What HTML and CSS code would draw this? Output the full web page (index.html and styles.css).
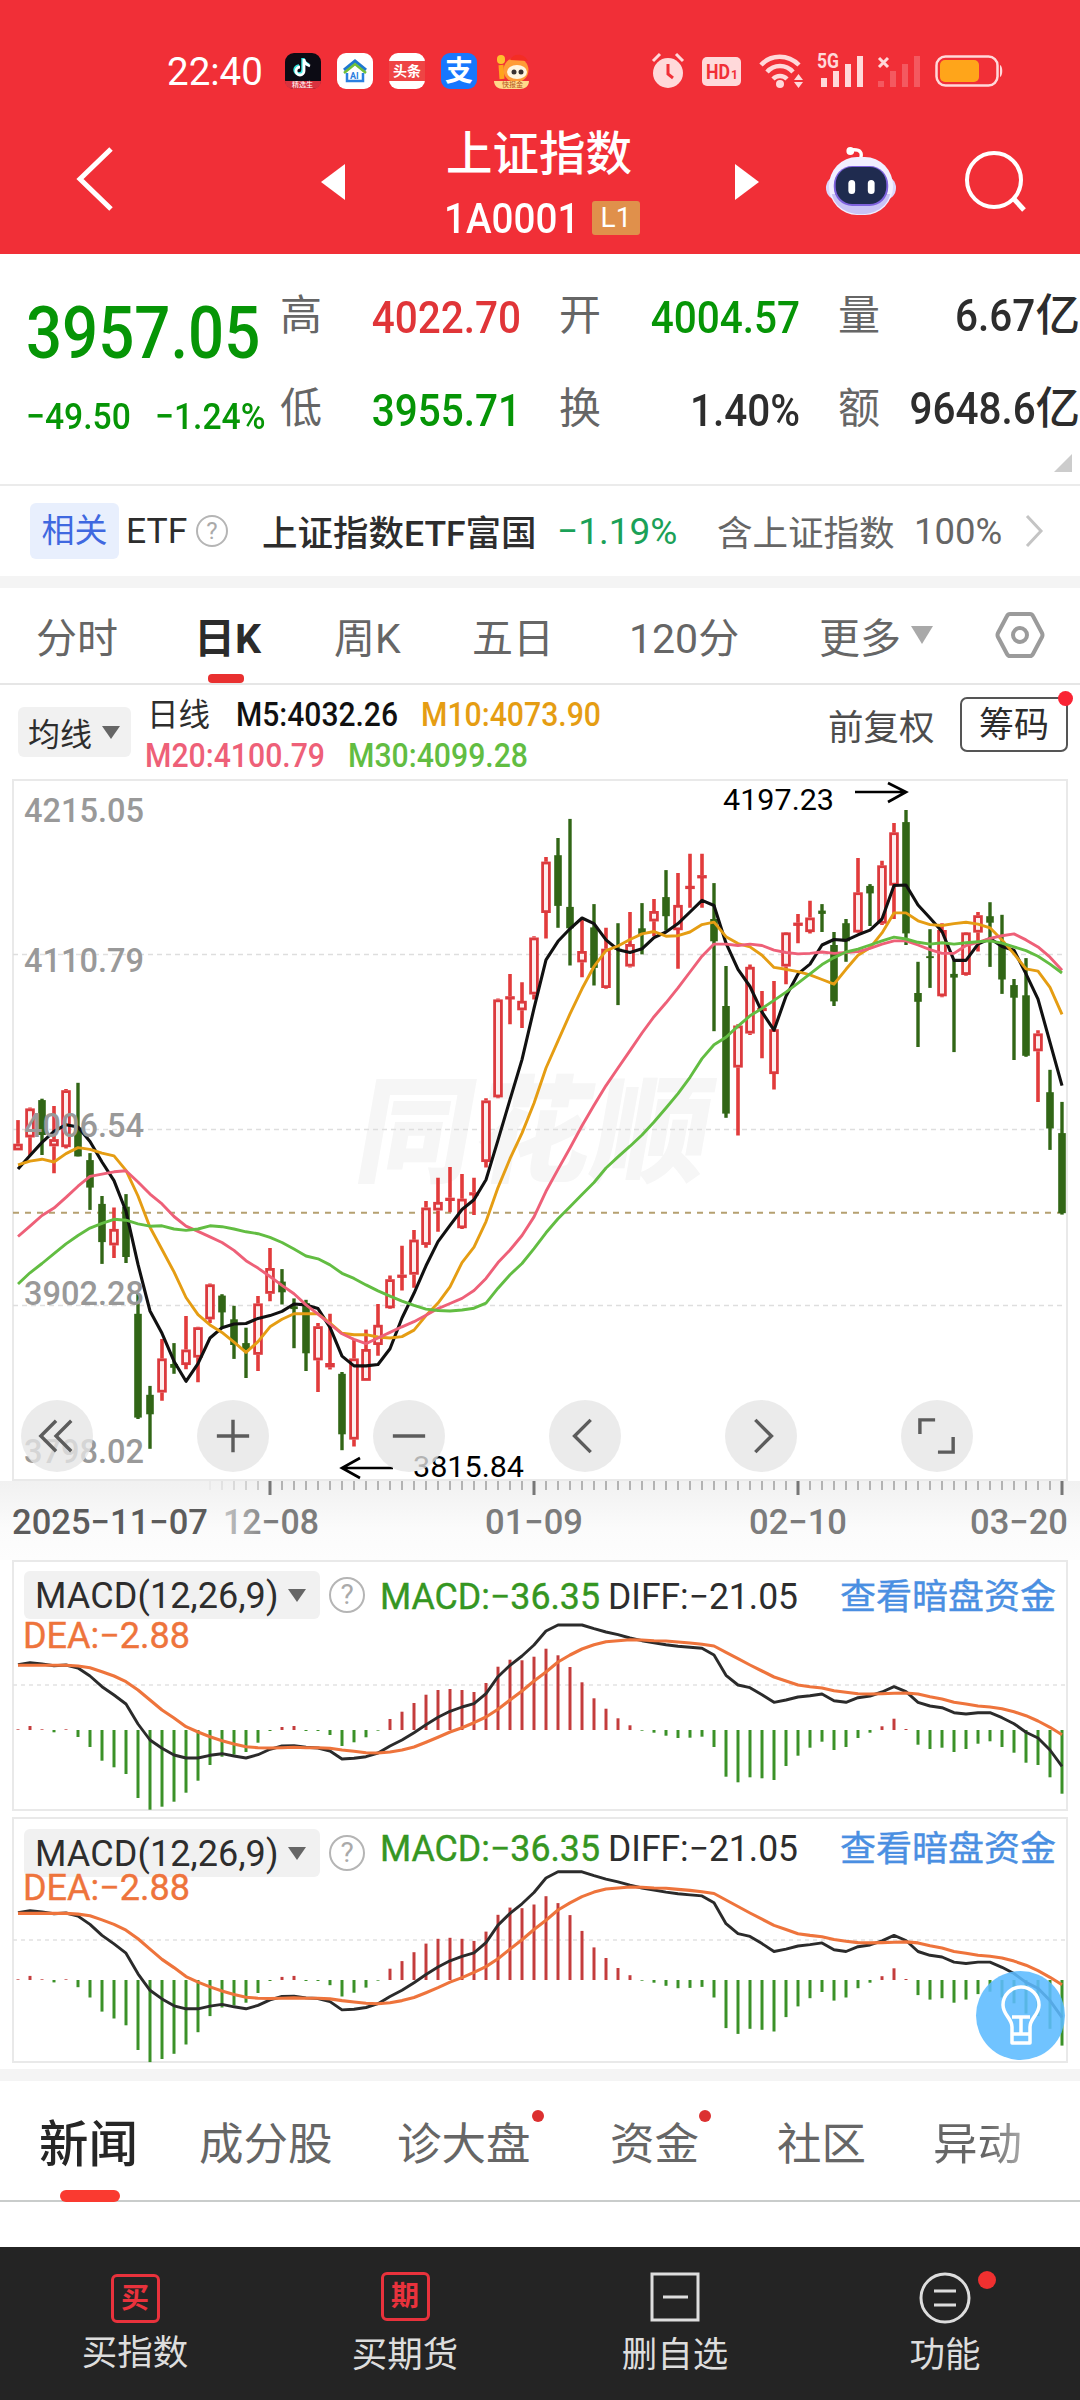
FILE: index.html
```html
<!DOCTYPE html>
<html lang="zh-CN">
<head>
    <meta charset="UTF-8">
    <meta name="viewport" content="width=device-width, initial-scale=1.0">
    <title>上证指数</title>
    <link rel="stylesheet" href="styles.css">
</head>
<body>
    <header class="header">
        <div class="status-bar">
            <span class="clock">22:40</span>
            <div class="app-icons">
                <svg width="36" height="36" viewBox="0 0 36 36">
                    <rect width="36" height="36" rx="9" fill="#0c0b14"/>
                    <path d="M18 5v12a4 4 0 1 1-4-4M18 6c1 4 3 5 6 6" fill="none" stroke="#35e4e0" stroke-width="3.400"/>
                    <path d="M19 6v12a4 4 0 1 1-4-4M19 7c1 4 3 5 6 6" fill="none" stroke="#fff" stroke-width="2.800"/>
                    <path d="M0 28h36c0 5-4 8-9 8H9c-5 0-9-3-9-8z" fill="#d8323f"/>
                    <text x="7" y="34" class="tiny" fill="#fff">精选生</text>
                </svg>
                <svg width="36" height="36" viewBox="0 0 36 36">
                    <rect width="36" height="36" rx="9" fill="#fff"/>
                    <path d="M7 17L18 8l11 9" fill="none" stroke="#1d78d0" stroke-width="3"/>
                    <path d="M7 20l11-9 11 9" fill="none" stroke="#6fbf3a" stroke-width="2.500"/>
                    <path d="M10 20v8h16v-8" fill="none" stroke="#2b7fe0" stroke-width="2.500"/>
                    <text x="13" y="26" class="tiny ai" fill="#2b7fe0">AI</text>
                </svg>
                <svg width="36" height="36" viewBox="0 0 36 36">
                    <rect width="36" height="36" rx="9" fill="#fff"/>
                    <path d="M0 8h36v20H0z" fill="#ee4444"/>
                    <text x="4" y="23" class="toutiao" fill="#fff">头条</text>
                </svg>
                <svg width="36" height="36" viewBox="0 0 36 36">
                    <rect width="36" height="36" rx="9" fill="#1777fe"/>
                    <text x="4" y="28" class="alipay" fill="#fff">支</text>
                </svg>
                <svg width="36" height="36" viewBox="0 0 36 36">
                    <rect x="4" y="2" width="8" height="9" rx="4" fill="#ffc02e"/>
                    <path d="M8 12l1 14" stroke="#ffa41c" stroke-width="5"/>
                    <circle cx="23" cy="17" r="12.500" fill="#ff9c35"/>
                    <path d="M17 7C20 0 31 0 35 8" fill="#f32d24"/>
                    <ellipse cx="24" cy="19" rx="10" ry="7" fill="#fff5e0"/>
                    <circle cx="21" cy="19" r="2.500" fill="#3a3230"/>
                    <circle cx="28" cy="19" r="2.500" fill="#3a3230"/>
                    <path d="M1 28h35c0 5-4 8-9 8H10c-5 0-9-3-9-8z" fill="#ffd98a"/>
                    <text x="9" y="34" class="tiny" fill="#b5561c">快报金</text>
                </svg>
            </div>
            <div class="sys-icons">
                <svg width="34" height="38" viewBox="0 0 34 38" fill="none" stroke="#ffd9da">
                    <circle cx="17" cy="21" r="15" fill="#ffd9da" stroke="none"/>
                    <path d="M2 9l7-7M32 9l-7-7" stroke-width="3"/>
                    <path d="M17 12v10l5 4" stroke="#f12f37" stroke-width="3"/>
                </svg>
                <svg class="hd" width="39" height="29" viewBox="0 0 39 29">
                    <rect width="39" height="29" rx="5" fill="#ffd9da"/>
                    <text x="4" y="22" font-size="21" font-weight="700" fill="#f12f37" textLength="24" lengthAdjust="spacingAndGlyphs">HD</text>
                    <text x="29" y="22" font-size="12" font-weight="700" fill="#f12f37">1</text>
                </svg>
                <svg class="wifi" width="45" height="36" viewBox="0 0 45 36" fill="none" stroke="#ffd9da" stroke-width="4.500">
                    <path d="M2 12C12 1 29 1 40 12M8 19c7-8 19-8 26 0M14 26c4-4 10-4 14 0"/>
                    <circle cx="21" cy="31" r="4" fill="#ffd9da" stroke="none"/>
                    <path d="M35 27l4.500-6 4.500 6zM35 29l4.500 6 4.500-6z" fill="#ffd9da" stroke="none"/>
                </svg>
                <svg class="signal" width="47" height="34" viewBox="0 0 47 34" fill="#ffd9da">
                    <text x="0" y="14" font-size="20" font-weight="700" textLength="22" lengthAdjust="spacingAndGlyphs">5G</text>
                    <path d="M4 24h6v9H4zM16 17h6v16h-6zM28 10h6v23h-6zM40 2h6v31h-6z"/>
                </svg>
                <svg class="signal" width="44" height="34" viewBox="0 0 44 34" fill="#ffd9da">
                    <path d="M2 4l9 9M11 4l-9 9" stroke="#ffd9da" stroke-width="3"/>
                    <path d="M1 27h6v6H1zM13 17h6v16h-6zM25 10h6v23h-6zM37 2h6v31h-6z" opacity=".25"/>
                </svg>
                <svg class="battery" width="68" height="32" viewBox="0 0 68 32">
                    <rect x="1.500" y="1.500" width="61" height="29" rx="9" fill="none" stroke="#ffd9da" stroke-width="2.500"/>
                    <rect x="5" y="5" width="39" height="22" rx="5" fill="#ffa51a"/>
                    <path d="M65 10c3 1 3 11 0 12z" fill="#ffd9da"/>
                </svg>
            </div>
        </div>
        <div class="title-bar">
            <svg class="back" width="40" height="66" viewBox="0 0 40 66" fill="none" stroke="#fff" stroke-width="5"><path d="M36 3L5 33l31 30"/></svg>
            <svg class="prev" width="24" height="36" viewBox="0 0 24 36"><path d="M0 18L24 0v36z" fill="#fff"/></svg>
            <div class="title">
                <h1>上证指数</h1>
                <div class="code"><span>1A0001</span><span class="level">L1</span></div>
            </div>
            <svg class="next" width="24" height="36" viewBox="0 0 24 36"><path d="M24 18L0 0v36z" fill="#fff"/></svg>
            <svg class="robot" width="72" height="70" viewBox="0 0 74 70" preserveAspectRatio="none">
                <path d="M36 14c3-7 1-11-9-10" fill="none" stroke="#fff" stroke-width="3.500"/>
                <circle cx="26" cy="5" r="4" fill="#fff"/>
                <rect x="1" y="30" width="72" height="24" rx="12" fill="#dcd7fb"/>
                <rect x="4" y="11" width="66" height="58" rx="29" fill="#f2efff"/>
                <path d="M7 48c6 27 54 27 60 0z" fill="#c9c2f5"/>
                <rect x="9" y="20" width="56" height="40" rx="19" fill="#7e62dd"/>
                <rect x="11" y="21" width="52" height="37" rx="17" fill="#1f2b4f"/>
                <rect x="24" y="34" width="7" height="14" rx="3.500" fill="#fff"/>
                <rect x="44" y="34" width="7" height="14" rx="3.500" fill="#fff"/>
            </svg>
            <svg class="search" width="62" height="64" viewBox="0 0 62 64" fill="none" stroke="#fff" stroke-width="4">
                <circle cx="29" cy="31" r="27"/><path d="M49 50l10 11" stroke-width="5"/>
            </svg>
        </div>
    </header>

    <section class="quote">
        <div class="price green">
            <div class="last"><span class="din">3957.05</span></div>
            <div class="change"><span class="din">−49.50</span><span class="din">−1.24%</span></div>
        </div>
        <div class="stats">
            <div class="stat"><label>高</label><b class="din red">4022.70</b></div>
            <div class="stat"><label>开</label><b class="din green">4004.57</b></div>
            <div class="stat"><label>量</label><b><i class="din">6.67</i>亿</b></div>
            <div class="stat"><label>低</label><b class="din green">3955.71</b></div>
            <div class="stat"><label>换</label><b class="din">1.40%</b></div>
            <div class="stat"><label>额</label><b><i class="din">9648.6</i>亿</b></div>
        </div>
        <div class="corner"></div>
    </section>

    <section class="etf">
        <span class="tag">相关</span>
        <span class="etf-word">ETF</span>
        <span class="help">?</span>
        <span class="etf-name">上证指数ETF富国</span>
        <span class="etf-rate">−1.19%</span>
        <span class="etf-hold">含上证指数</span>
        <span class="etf-pct">100%</span>
        <svg width="18" height="34" viewBox="0 0 18 34" fill="none" stroke="#c4c4c4" stroke-width="3"><path d="M2 2l14 15L2 32"/></svg>
    </section>

    <nav class="periods">
        <a class="p1">分时</a>
        <a class="p2 active">日K</a>
        <a class="p3">周K</a>
        <a class="p4">五日</a>
        <a class="p5">120分</a>
        <a class="p6">更多</a>
        <svg class="more" width="22" height="18" viewBox="0 0 22 18"><path d="M0 0h22L11 18z" fill="#a9a9a9"/></svg>
        <svg class="gear" width="50" height="48" viewBox="0 0 50 48" fill="none" stroke="#9b9b9b" stroke-width="4">
            <path d="M15 3h20q2 0 3 2l9 17q1 2 0 4l-9 17q-1 2-3 2H15q-2 0-3-2L3 26q-1-2 0-4l9-17q1-2 3-2z"/>
            <circle cx="25" cy="24" r="7"/>
        </svg>
    </nav>

    <section class="averages">
        <div class="ma-button">均线<svg width="18" height="13" viewBox="0 0 18 13"><path d="M0 0h18L9 13z" fill="#666"/></svg></div>
        <svg class="ma-values" width="470" height="94" viewBox="0 0 470 94">
            <text x="-1" y="41" class="ma-name">日线</text>
            <text x="88" y="41" fill="#111" textLength="162" lengthAdjust="spacingAndGlyphs">M5:4032.26</text>
            <text x="273" y="41" fill="#e59d13" textLength="180" lengthAdjust="spacingAndGlyphs">M10:4073.90</text>
            <text x="-3" y="82" fill="#ee6078" textLength="180" lengthAdjust="spacingAndGlyphs">M20:4100.79</text>
            <text x="200" y="82" fill="#62bd42" textLength="180" lengthAdjust="spacingAndGlyphs">M30:4099.28</text>
        </svg>
        <span class="adjust">前复权</span>
        <span class="chips">筹码</span>
    </section>

    <section class="kline">
        <svg id="kline" width="1080" height="702" viewBox="0 779 1080 702"></svg>
        <div class="tools">
            <button><svg viewBox="0 0 40 40"><path d="M19 4L3 20l16 16M35 4L19 20l16 16"/></svg></button>
            <button><svg viewBox="0 0 40 40"><path d="M20 3v34M3 20h34"/></svg></button>
            <button><svg viewBox="0 0 40 40"><path d="M3 20h34"/></svg></button>
            <button><svg viewBox="0 0 40 40"><path d="M26 3L9 20l17 17"/></svg></button>
            <button><svg viewBox="0 0 40 40"><path d="M14 3l17 17-17 17"/></svg></button>
            <button><svg viewBox="0 0 40 40"><path d="M2 18V3h16M37 21v16H21"/></svg></button>
        </div>
    </section>

    <section class="time-axis">
        <svg id="axis" width="1080" height="79" viewBox="0 1481 1080 79"></svg>
    </section>

    <section class="macd">
        <div class="macd-button">MACD(12,26,9)<svg width="18" height="13" viewBox="0 0 18 13"><path d="M0 0h18L9 13z" fill="#666"/></svg></div>
        <span class="help">?</span>
        <svg id="macd1" width="1080" height="257" viewBox="0 0 1080 257"></svg>
    </section>
    <section class="macd second">
        <div class="macd-button">MACD(12,26,9)<svg width="18" height="13" viewBox="0 0 18 13"><path d="M0 0h18L9 13z" fill="#666"/></svg></div>
        <span class="help">?</span>
        <svg id="macd2" width="1080" height="252" viewBox="0 0 1080 252"></svg>
        <div class="lamp">
            <svg width="44" height="62" viewBox="0 0 44 62" fill="none" stroke="#fff" stroke-width="3.500" stroke-linejoin="round">
                <path d="M13 58V42C13 33 4 30 4 20a18 18 0 0 1 36 0c0 10-9 13-9 22v16z"/>
                <path d="M13 32h18M22 32v17M13 49h18"/>
            </svg>
        </div>
    </section>

    <nav class="news">
        <a class="n1 active">新闻</a>
        <a class="n2">成分股</a>
        <a class="n3 dot">诊大盘</a>
        <a class="n4 dot">资金</a>
        <a class="n5">社区</a>
        <a class="n6">异动</a>
    </nav>
    <div class="blank"></div>

    <footer class="bottom-nav">
        <a><span class="box buy">买</span>买指数</a>
        <a><span class="box future">期</span>买期货</a>
        <a><svg width="50" height="50" viewBox="0 0 50 50" fill="none" stroke="#ddd" stroke-width="3"><path d="M2 2h46v46H2zM13 25h25"/></svg>删自选</a>
        <a class="func"><svg width="52" height="52" viewBox="0 0 52 52" fill="none" stroke="#ddd" stroke-width="3"><circle cx="26" cy="26" r="24"/><path d="M15 19h22M15 33h22"/></svg>功能</a>
    </footer>
    <script src="script.js"></script>
</body>
</html>
```

FILE: styles.css
```css
* {
    box-sizing: border-box;
}
body {
    margin: 0;
    width: 1080px;
    height: 2400px;
    overflow: hidden;
    background: #fff;
    color: #2d2d2d;
    font-family: Roboto, "Noto Sans CJK SC", sans-serif;
}
svg {
    display: block;
    flex: none;
    overflow: visible;
}
.din {
    display: inline-block;
    font-style: normal;
    transform: scaleX(0.91);
    transform-origin: right center;
}
.green {
    color: #069506;
}
.red {
    color: #e03538;
}
.tiny {
    font-size: 7px;
}
.ai {
    font-size: 9px;
    font-weight: 700;
}
.toutiao {
    font-size: 14px;
    font-weight: 700;
}
.alipay {
    font-size: 28px;
    font-weight: 700;
}

/* header */
.header {
    height: 254px;
    background: #f12f37;
    color: #fff;
}
.status-bar {
    display: flex;
    align-items: center;
    height: 142px;
    padding-left: 167px;
}
.clock {
    width: 118px;
    font-size: 38.5px;
}
.app-icons {
    display: flex;
    gap: 16px;
    width: 366px;
}
.sys-icons {
    display: flex;
    align-items: center;
}
.hd {
    margin-left: 17px;
}
.wifi {
    margin-left: 18px;
}
.signal {
    margin-left: 13px;
}
.battery {
    margin-left: 14px;
}
.title-bar {
    display: flex;
    height: 112px;
}
.back {
    margin: 4px 0 0 75px;
}
.prev {
    margin: 22px 0 0 206px;
}
.title {
    width: 196px;
    margin-left: 101px;
}
.title h1 {
    margin: -22px 0 0;
    font-size: 46.5px;
    line-height: 68px;
    font-weight: 500;
    white-space: nowrap;
}
.code {
    display: flex;
    align-items: center;
    height: 34px;
    margin: 13px 0 0 -2px;
    font-size: 42px;
}
.code span:first-child {
    width: 148px;
    font-weight: 500;
    transform: scaleX(0.92);
    transform-origin: left;
}
.code .level {
    width: 48px;
    height: 34px;
    border-radius: 3px;
    background: #e0904b;
    font-size: 28px;
    line-height: 34px;
    text-align: center;
}
.next {
    margin: 22px 0 0 93px;
}
.robot {
    margin: 4px 0 0 66px;
}
.search {
    margin: 7px 0 0 68px;
}

/* quote */
.quote {
    position: relative;
    display: flex;
    height: 232px;
    border-bottom: 2px solid #ebebeb;
}
.price {
    width: 280px;
    padding: 35px 0 0 26px;
}
.price .din {
    transform-origin: left center;
}
.last {
    font-size: 73px;
    line-height: 88px;
    font-weight: 500;
}
.last .din {
    transform: scaleX(0.87);
}
.change {
    display: flex;
    margin-top: 17px;
    font-size: 37px;
    line-height: 46px;
    font-weight: 500;
    white-space: nowrap;
}
.change .din:first-child {
    width: 129px;
}
.stats {
    display: grid;
    grid-template-columns: repeat(3, 241px);
    grid-template-rows: 93px 93px;
    column-gap: 38px;
    padding-top: 17px;
}
.stat {
    display: flex;
    align-items: center;
    justify-content: space-between;
    font-size: 43px;
    line-height: 60px;
    white-space: nowrap;
}
.stat label {
    margin-top: -3px;
    font-size: 42px;
    color: #666;
}
.stat b {
    font-weight: 500;
    font-size: 44.5px;
}
.stat:nth-child(3n) b {
    margin: -3px -1px 0 0;
}
.corner {
    position: absolute;
    right: 8px;
    bottom: 12px;
    border-left: 18px solid transparent;
    border-bottom: 18px solid #ccc;
}

/* related ETF */
.etf {
    display: flex;
    align-items: center;
    height: 90px;
    padding-left: 30px;
    font-size: 35.5px;
    white-space: nowrap;
}
.tag {
    width: 89px;
    height: 56px;
    border-radius: 6px;
    background: #e8effd;
    color: #3f68e0;
    font-size: 33px;
    line-height: 56px;
    text-align: center;
}
.etf-word {
    width: 69px;
    padding-left: 7px;
}
.help {
    width: 32px;
    height: 32px;
    border: 2px solid #b5b5b5;
    border-radius: 50%;
    color: #aaa;
    font-size: 24px;
    line-height: 28px;
    text-align: center;
}
.etf .help {
    margin-left: 8px;
}
.etf-name {
    width: 329px;
    padding-left: 34px;
    font-weight: 500;
}
.etf-name,
.etf-hold {
    margin-top: -2px;
}
.etf-rate {
    width: 160px;
    color: #1ba158;
    font-size: 37px;
}
.etf-hold {
    width: 197px;
    color: #666;
}
.etf-pct {
    width: 111px;
    color: #666;
    font-size: 36.5px;
}

/* period tabs */
.periods {
    display: flex;
    align-items: center;
    height: 109px;
    border-top: 12px solid #f4f4f4;
    border-bottom: 2px solid #e6e6e6;
    padding: 0 0 2px 36px;
    font-size: 41px;
    color: #666;
    white-space: nowrap;
}
.p1 {
    width: 158px;
}
.p2 {
    position: relative;
    width: 140px;
}
.periods .active {
    color: #2b2b2b;
    font-weight: 700;
}
.periods .active::after {
    content: "";
    position: absolute;
    left: 14px;
    top: 69px;
    width: 36px;
    height: 9px;
    border-radius: 4px;
    background: #e93030;
}
.p3 {
    width: 138px;
}
.p4 {
    width: 157px;
}
.p5 {
    width: 190px;
}
.p6 {
    width: 92px;
}
.gear {
    margin-left: 62px;
}

/* moving averages */
.averages {
    display: flex;
    height: 94px;
    padding-left: 18px;
}
.ma-button {
    display: flex;
    align-items: center;
    gap: 10px;
    width: 113px;
    height: 50px;
    margin: 22px 17px 0 0;
    padding-left: 10px;
    border-radius: 6px;
    background: #f1f1f1;
    font-size: 32px;
}
.ma-values {
    font-size: 33px;
    font-weight: 500;
}
.ma-name {
    font-size: 31.5px;
    font-weight: 400;
    fill: #2d2d2d;
}
.adjust {
    width: 132px;
    margin-left: 210px;
    font-size: 35.5px;
    line-height: 86px;
    color: #4d4d4d;
}
.chips {
    position: relative;
    width: 108px;
    height: 55px;
    margin-top: 12px;
    border: 2px solid #555;
    border-radius: 7px;
    font-size: 35px;
    line-height: 54px;
    text-align: center;
}
.chips::after {
    content: "";
    position: absolute;
    right: -7px;
    top: -8px;
    width: 15px;
    height: 15px;
    border-radius: 50%;
    background: #fa2434;
}

/* candles */
.kline {
    position: relative;
    height: 702px;
}
.tools {
    position: absolute;
    left: 21px;
    top: 621px;
    display: flex;
    gap: 104px;
}
.tools button {
    display: flex;
    align-items: center;
    justify-content: center;
    width: 72px;
    height: 72px;
    padding: 0;
    border: 0;
    border-radius: 50%;
    background: rgba(230, 230, 230, 0.78);
}
.tools svg {
    width: 38px;
    height: 38px;
    fill: none;
    stroke: #5c5c5c;
    stroke-width: 3.6;
}
.scale-label {
    font-size: 34px;
    font-weight: 500;
    fill: #999;
}
.peak {
    font-size: 30px;
    fill: #000;
}
.watermark {
    font-size: 116px;
    font-weight: 900;
    fill: #f6f6f6;
}
.time-axis {
    height: 79px;
    background: linear-gradient(#f1f1f1, #fbfbfb 60%, #fdfdfd);
}
.axis-label {
    font-size: 35px;
    font-weight: 500;
    fill: #7c7c7c;
}

/* macd */
.macd {
    position: relative;
    height: 257px;
}
.macd.second {
    height: 252px;
}
.macd-button {
    position: absolute;
    left: 24px;
    top: 11px;
    display: flex;
    align-items: center;
    width: 296px;
    height: 48px;
    padding: 2px 0 0 11px;
    border-radius: 6px;
    background: #f1f1f1;
    font-size: 36px;
    letter-spacing: 0.1px;
}
.macd-button svg {
    position: absolute;
    right: 14px;
    top: 18px;
}
.second .macd-button {
    top: 12px;
}
.macd .help {
    position: absolute;
    left: 329px;
    top: 17px;
    width: 36px;
    height: 36px;
    border-width: 2.5px;
    font-size: 28px;
    line-height: 31px;
}
.second .help {
    top: 18px;
}
.macd > svg {
    position: relative;
}
.macd-value {
    font-size: 36.5px;
}
.macd-link {
    font-size: 35.7px;
    fill: #4a8fe2;
}
.lamp {
    position: absolute;
    left: 976px;
    top: 154px;
    display: flex;
    align-items: center;
    justify-content: center;
    width: 89px;
    height: 89px;
    border-radius: 50%;
    background: rgba(92, 187, 255, 0.88);
}

/* news tabs */
.news {
    display: flex;
    align-items: center;
    height: 133px;
    border-top: 12px solid #f4f4f4;
    border-bottom: 2px solid #c9cccb;
    padding: 0 0 1px 39px;
    font-size: 44.5px;
    color: #666;
    white-space: nowrap;
}
.news a {
    position: relative;
}
.n1 {
    width: 160px;
}
.n2 {
    width: 198px;
}
.n3 {
    width: 213px;
}
.n4 {
    width: 167px;
}
.n5 {
    width: 156px;
}
.n6 {
    background: linear-gradient(90deg, #666 60%, #aaa);
    background-clip: text;
    -webkit-background-clip: text;
    color: transparent;
}
.news .active {
    font-size: 49.5px;
    font-weight: 500;
    color: #262626;
}
.news .active::after {
    content: "";
    position: absolute;
    left: 21px;
    top: 85px;
    width: 60px;
    height: 12px;
    border-radius: 6px;
    background: #fa3a30;
}
.dot::after {
    content: "";
    position: absolute;
    top: 2px;
    width: 12px;
    height: 12px;
    border-radius: 50%;
    background: #dc3030;
}
.n3::after {
    left: 135px;
}
.n4::after {
    left: 89px;
}
.blank {
    height: 45px;
}

/* bottom bar */
.bottom-nav {
    display: grid;
    grid-template-columns: repeat(4, 270px);
    height: 153px;
    background: #242424;
    color: #ddd;
}
.bottom-nav a {
    position: relative;
    display: flex;
    flex-direction: column;
    align-items: center;
    padding-top: 25px;
    font-size: 35.5px;
    line-height: 67px;
}
.box {
    width: 49px;
    height: 49px;
    margin-bottom: 1px;
    border: 3px solid #e9323c;
    border-radius: 6px;
    color: #e9323c;
    font-size: 28px;
    font-weight: 700;
    line-height: 43px;
    text-align: center;
}
.buy {
    margin-top: 2px;
    margin-bottom: -3px;
    line-height: 44px;
}
.func::after {
    content: "";
    position: absolute;
    left: 168px;
    top: 24px;
    width: 18px;
    height: 18px;
    border-radius: 50%;
    background: #f03030;
}
.func svg {
    margin-bottom: -2px;
}
```

FILE: script.js
```javascript
// One slot every 12px, 88 trading days
const STEP = 12;
const X0 = 18;
const xAt = i => X0 + i * STEP;
const ky = v => (770 + v / 2.148).toFixed(1);

// type, high, body top, body bottom, low (r = up, g = down)
const candles = `r752,803,817,817 r725,727,789,828 g706,709,784,827 r722,793,808,866 r685,688,810,813 g672,768,830,830
g823,838,897,945 g915,932,1014,1061 r940,986,1021,1048 g911,938,1046,1059 g1125,1168,1391,1394 g1323,1342,1384,1458
r1222,1264,1337,1355 g1231,1276,1284,1297 r1173,1245,1278,1287 r1196,1197,1262,1315 r1103,1105,1180,1188 g1126,1129,1165,1198
g1151,1180,1235,1265 g1198,1231,1244,1306 r1130,1146,1256,1291 r1027,1070,1125,1141 g1072,1099,1122,1148 g1135,1152,1158,1242
g1138,1145,1253,1291 r1188,1195,1268,1336 r1168,1274,1283,1288 g1293,1297,1427,1461 r1224,1264,1438,1453 r1202,1244,1312,1312
r1147,1192,1235,1258 r1086,1094,1156,1158 r1022,1084,1088,1118 r988,1009,1084,1112 r926,940,1020,1026 r876,928,946,992
r853,919,923,950 r868,921,984,986 r876,907,911,956 r705,710,842,854 r491,493,703,705 r438,486,491,546
r456,496,516,554 r357,360,482,493 r187,197,307,362 g146,183,292,339 g105,294,340,420 r322,389,413,445
g288,338,425,463 r339,384,468,470 g329,384,386,505 r305,374,422,424 g286,340,352,396 r277,303,325,357
g215,273,314,345 r221,290,344,427 r180,249,254,296 r180,226,231,296 g243,320,368,561 g421,507,738,747
r546,549,639,785 r418,423,566,569 r475,511,515,619 r453,557,653,686 r348,349,422,460 r309,328,333,372
r281,317,348,351 g288,302,309,348 g348,376,497,507 g320,329,368,412 r189,263,349,350 g245,249,265,335
r195,205,330,333 r114,134,248,320 g86,112,351,376 g412,479,498,595 g342,400,404,468 r329,344,486,488
g409,438,446,606 r348,349,440,442 r305,312,349,390 g284,314,328,423 g311,376,450,481 g449,462,489,623
g404,484,614,616 r559,566,604,713 g644,692,770,816 g713,780,952,955`.split(/\s+/);

const averages = {
    '#111': [857,828,800,776,762,767,798,842,882,948,1062,1162,1210,1270,1313,1275,1220,1198,1190,1189,1178,1172,1163,1147,1149,1157,1197,1259,1280,1280,1277,1243,1177,1124,1065,1013,978,944,923,880,795,708,622,512,408,368,341,318,330,365,386,392,384,360,348,330,305,280,291,372,428,465,520,559,486,438,417,376,364,366,354,344,320,248,247,290,318,347,409,409,374,362,379,387,438,492,585,678],
    '#e59d13': [848,840,836,842,824,811,815,823,829,860,915,982,1030,1078,1133,1170,1192,1208,1229,1251,1228,1196,1180,1168,1168,1168,1188,1210,1213,1213,1218,1220,1217,1203,1172,1145,1110,1058,1025,970,897,835,780,716,640,582,524,470,422,388,378,364,352,347,357,356,348,332,327,358,373,380,398,424,428,433,440,450,460,428,398,382,350,307,307,324,332,334,330,327,331,339,365,395,427,432,467,525],
    '#ee6078': [1002,980,957,941,918,894,873,868,863,861,885,911,932,959,980,991,1003,1015,1032,1054,1070,1088,1107,1125,1149,1169,1190,1211,1223,1232,1220,1208,1196,1185,1171,1157,1146,1135,1118,1092,1058,1031,1000,960,905,858,812,764,720,678,640,603,565,530,500,468,434,400,374,374,377,374,377,387,392,395,394,391,394,392,390,383,374,367,367,376,386,394,394,377,370,362,356,352,365,380,402,430],
    '#62bd42': [1104,1080,1060,1039,1018,1000,984,974,965,967,975,980,979,986,989,986,979,981,986,992,996,1004,1015,1029,1044,1050,1063,1081,1092,1106,1119,1130,1141,1150,1158,1161,1162,1160,1156,1145,1113,1084,1060,1028,994,964,938,912,886,855,831,808,784,756,726,695,660,620,590,574,550,528,512,495,477,458,438,418,403,391,385,376,367,359,363,370,374,371,374,371,369,367,372,380,388,400,417,436]
};

function line(values, y, color, width) {
    const pts = values.map((v, i) => `${xAt(i)},${y(v)}`).join(' ');
    return `<polyline points="${pts}" fill="none" stroke="${color}" stroke-width="${width}" stroke-linejoin="round"/>`;
}

function text(x, y, str, cls, width, extra = '') {
    return `<text x="${x}" y="${y}" class="${cls}" textLength="${width}" lengthAdjust="spacingAndGlyphs" ${extra}>${str}</text>`;
}

function drawKline() {
    let s = '<rect x="13" y="780" width="1054" height="700" fill="#fff" stroke="#e9e9e9" stroke-width="2"/>';
    s += '<text class="watermark" transform="translate(352 1173) skewX(-10)" textLength="352">同花顺</text>';
    [396, 772, 1150].forEach(v => {
        s += `<path d="M13 ${ky(v)}H1066" stroke="#dedede" stroke-width="1.500" stroke-dasharray="5 4"/>`;
    });
    s += `<path d="M13 ${ky(951)}H1066" stroke="#b5a070" stroke-width="2" stroke-dasharray="6 6"/>`;
    candles.forEach((c, i) => {
        const [hi, top, bottom, lo] = c.slice(1).split(',').map(Number);
        const x = xAt(i);
        if (c[0] === 'g') {
            s += `<path d="M${x} ${ky(hi)}V${ky(lo)}" stroke="#316616" stroke-width="3.400"/>`;
            s += `<path d="M${x} ${ky(top)}V${ky(bottom)}" stroke="#316616" stroke-width="7.600"/>`;
        } else {
            s += `<path d="M${x} ${ky(hi)}V${ky(top)}M${x} ${ky(bottom)}V${ky(lo)}" stroke="#e23b3b" stroke-width="3.600"/>`;
            const h = Math.max((bottom - top) / 2.148 - 2.6, 0.5);
            s += `<rect x="${x - 3.4}" y="${+ky(top) + 1.3}" width="6.800" height="${h}" fill="#fdeeee" stroke="#dc3a3e" stroke-width="2.800"/>`;
        }
    });
    Object.entries(averages).forEach(([color, values]) => {
        s += line(values, ky, color, color === '#111' ? 3.1 : 2.9);
    });
    [['4215.05', 822], ['4110.79', 972], ['4006.54', 1137], ['3902.28', 1305], ['3798.02', 1463]].forEach(([v, y]) => {
        s += text(24, y, v, 'scale-label', 120);
    });
    s += text(723, 810, '4197.23', 'peak', 111);
    s += text(413, 1477, '3815.84', 'peak', 111);
    s += '<path d="M855 792H906M888 783L906 792L888 802" fill="none" stroke="#000" stroke-width="2.700"/>';
    s += '<path d="M393 1468H342M360 1458L342 1468L360 1478" fill="none" stroke="#000" stroke-width="2.700"/>';
    document.getElementById('kline').innerHTML = s;
}

function drawAxis() {
    let s = '<defs><linearGradient id="fade"><stop offset="0" stop-color="#c4c4c4"/><stop offset=".5" stop-color="#7c7c7c"/></linearGradient></defs>';
    for (let i = 16; i < 88; i++) {
        const major = (i - 21) % 22 === 0;
        const faint = i < 21 ? (i - 15) / 8 : 1;
        s += `<path d="M${xAt(i)} 1481V${major ? 1495 : 1490}" stroke="${major ? '#777' : '#999'}" stroke-width="${major ? 3 : 1.4}" opacity="${faint}"/>`;
    }
    s += text(12, 1534, '2025−11−07', 'axis-label', 196, 'style="fill:#5c5c5c"');
    s += text(223, 1534, '12−08', 'axis-label', 96, 'style="fill:url(#fade)"');
    s += text(485, 1534, '01−09', 'axis-label', 98);
    s += text(749, 1534, '02−10', 'axis-label', 98);
    s += text(970, 1534, '03−20', 'axis-label', 98);
    document.getElementById('axis').innerHTML = s;
}

// Offsets from the zero line, three units per pixel
const bars = [538,528,538,547,538,561,591,632,652,672,744,779,770,755,728,692,645,620,614,606,578,543,531,528,543,543,555,588,577,562,542,507,485,459,434,420,417,420,426,399,350,329,331,320,296,316,351,397,445,476,505,526,542,548,557,564,563,560,591,680,697,682,685,690,648,617,593,575,600,591,564,548,529,506,537,584,597,593,606,597,581,574,591,608,638,645,682,731];
const diff = [344,338,342,347,345,354,378,410,435,462,522,570,595,615,624,624,616,611,618,624,614,598,588,587,592,594,603,627,625,620,609,588,570,548,524,502,484,471,461,431,380,346,318,285,243,225,225,225,236,246,254,264,272,278,284,289,292,295,315,376,405,413,434,457,450,441,437,432,452,457,443,438,426,410,425,457,468,473,488,492,488,488,503,521,547,564,600,649];
const dea = [346,346,346,346,346,348,353,365,378,395,420,450,480,504,530,546,560,572,582,590,593,594,593,592,593,593,595,600,604,608,609,606,600,591,577,562,546,533,518,501,478,450,423,393,366,336,315,297,284,275,272,269,270,272,273,276,279,283,288,307,326,345,363,381,393,405,410,414,422,427,431,432,431,430,429,432,440,447,457,462,468,471,476,485,497,513,532,554];

function drawMacd(id, o) {
    const y = v => (o.zero + (v - 540) / 3 * o.scale).toFixed(1);
    let s = `<rect x="13" y="1" width="1054" height="${o.height}" fill="none" stroke="#e9e9e9" stroke-width="2"/>`;
    s += `<path d="M13 ${o.grid}H1066" stroke="#e2e2e2" stroke-width="1.500" stroke-dasharray="4 4"/>`;
    bars.forEach((v, i) => {
        s += `<path d="M${xAt(i)} ${o.zero}V${y(v)}" stroke="${v < 540 ? '#c43c3c' : '#3b9128'}" stroke-width="3"/>`;
    });
    s += line(diff, y, '#2b2b2b', 2.9) + line(dea, y, '#ee743c', 3.1);
    s += text(380, o.base, 'MACD:−36.35', 'macd-value', 220, 'fill="#359622" stroke="#359622" stroke-width=".4"');
    s += text(608, o.base, 'DIFF:−21.05', 'macd-value', 190, 'fill="#2d2d2d"');
    s += text(23, o.base + 39, 'DEA:−2.88', 'macd-value', 167, 'fill="#ee743c" stroke="#ee743c" stroke-width=".4"');
    s += text(840, o.base, '查看暗盘资金', 'macd-link', 216, 'stroke="#4a8fe2" stroke-width=".4"');
    document.getElementById(id).innerHTML = s;
}

drawKline();
drawAxis();
drawMacd('macd1', { zero: 170, scale: 1, height: 249, grid: 125, base: 49 });
drawMacd('macd2', { zero: 163, scale: 1.03, height: 244, grid: 123, base: 44 });
```
